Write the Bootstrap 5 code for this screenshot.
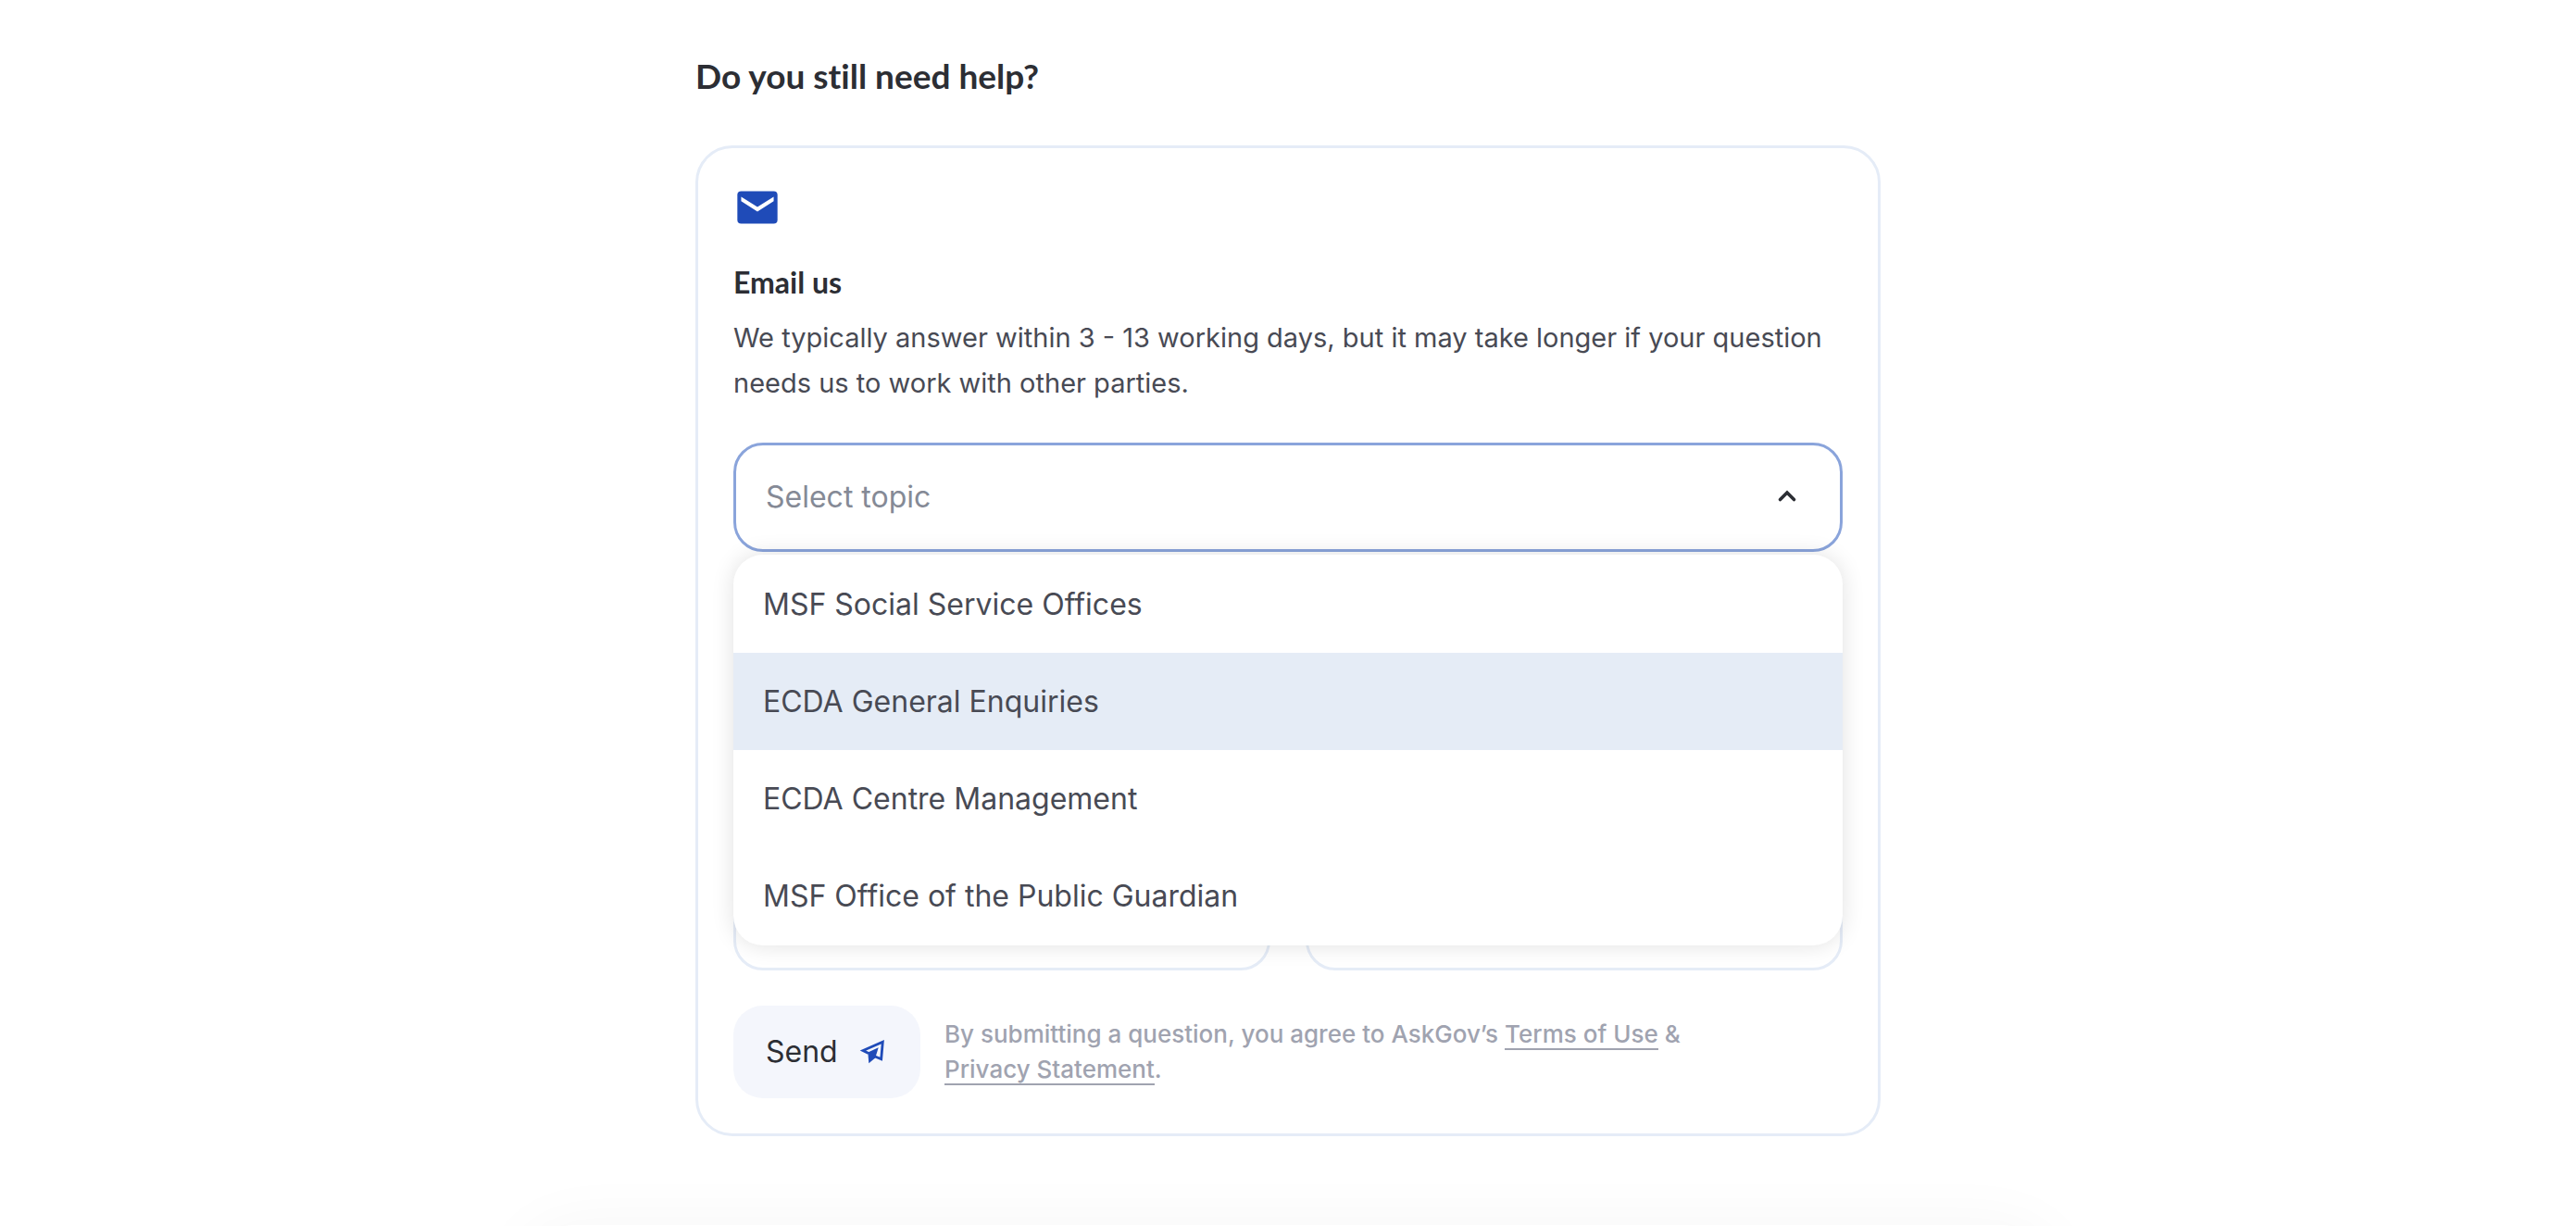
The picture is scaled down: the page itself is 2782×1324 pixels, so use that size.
<!DOCTYPE html>
<html lang="en">
<head>
<meta charset="utf-8">
<meta name="viewport" content="width=device-width, initial-scale=1">
<title>AskGov</title>
<link href="https://cdn.jsdelivr.net/npm/bootstrap@5.3.0/dist/css/bootstrap.min.css" rel="stylesheet">
<style>
  :root {
    --ink: #2c2e34;
    --body-ink: #484a54;
    --muted-ink: #858a96;
    --legal-ink: #a0a3b0;
    --line: #e5ecf7;
    --focus-line: #8aa4db;
    --brand: #1f4bb8;
  }
  body { font-family: Inter, "Liberation Sans", sans-serif; color: var(--body-ink); background: #fff; }
  .page-shell::after {
    content: ""; position: absolute; top: calc(100% - 1px); left: 50%; translate: -50% 0;
    width: 1660px; height: 400px; border-radius: 60px; background: #fff;
    box-shadow: 0 0 70px rgba(0, 0, 0, .04);
  }
  .help-section { max-width: 1280px; padding-top: 58px; padding-bottom: 96px; }
  .help-title, .contact-title {
    font-family: Lato, "Liberation Sans", sans-serif; font-weight: 700; color: var(--ink);
    font-variant-ligatures: none;
  }
  .help-title { font-size: 37px; line-height: 48px; margin-bottom: 51px; }
  .contact-card { border: 3px solid var(--line); border-radius: 40px; padding: 38px; }
  .mail-icon { width: 52px; height: 52px; }
  .contact-title { font-size: 32px; line-height: 40px; margin: 35px 0 15px; }
  .contact-note { font-size: 29px; line-height: 49px; margin-bottom: 40px; }
  .form-stack { gap: 38px; }
  .form-stack .form-control, .form-stack .form-select {
    height: 118px; border: 3px solid var(--line); border-radius: 32px;
    padding: 0 32px; font-size: 32px; box-shadow: none;
  }
  .form-stack textarea.form-control { height: 258px; resize: none; padding: 32px; }
  .form-stack .form-select { color: var(--muted-ink); border-color: var(--focus-line); background-image: none; }
  .chevron { right: 39px; width: 42px; height: 42px; color: var(--ink); pointer-events: none; }
  .topic-menu {
    top: 121px; z-index: 5; padding: 1px 0; border-radius: 32px; overflow: hidden;
    box-shadow: 0 0 24px rgba(0, 0, 0, .12);
  }
  .topic-menu .topic-item {
    border: 0; padding: 0 32px; font-size: 32px; line-height: 105px;
    background: transparent; color: var(--body-ink);
  }
  .topic-menu .topic-item.current { background: #e5ecf6; }
  .send-row { gap: 26px; }
  .send-btn {
    width: 202px; height: 100px; border: 0; border-radius: 32px; background: #f4f6fc;
    color: var(--ink); font-size: 32px; padding: 0 38px 0 35px;
  }
  .send-btn svg { width: 28px; height: 28px; }
  .legal-note { font-size: 26px; line-height: 38px; font-weight: 500; color: var(--legal-ink); }
  .legal-note a { color: inherit; text-decoration: none; border-bottom: 2px solid var(--legal-ink); }
</style>
</head>
<body>
<div class="page-shell position-relative overflow-hidden min-vh-100">
  <main class="help-section mx-auto">
    <h2 class="help-title">Do you still need help?</h2>
    <section class="contact-card">
      <svg class="mail-icon d-block" viewBox="0 0 24 24" aria-hidden="true">
        <rect x="2" y="3.9" width="20" height="16.2" rx="1.9" fill="#1f4bb8"/>
        <path d="M3.9 6.7 12 11.8l8.1-5.1v2.2L12 14.1 3.9 8.9z" fill="#fff"/>
      </svg>
      <h3 class="contact-title">Email us</h3>
      <p class="contact-note">We typically answer within 3 - 13 working days, but it may take longer if your question needs us to work with other parties.</p>
      <form class="form-stack d-flex flex-column">
        <div class="position-relative d-flex align-items-center">
          <select class="form-select" aria-label="Select topic">
            <option selected>Select topic</option>
          </select>
          <svg class="chevron position-absolute" viewBox="0 0 42 42" fill="none" stroke="currentColor" stroke-width="3.6" stroke-linecap="round" aria-hidden="true"><path d="m13.500 23.500 7.500-7.500 7.500 7.500"/></svg>
          <ul class="topic-menu list-unstyled position-absolute start-0 w-100 bg-white mb-0">
            <li><button type="button" class="topic-item d-block w-100 text-start">MSF Social Service Offices</button></li>
            <li><button type="button" class="topic-item current d-block w-100 text-start">ECDA General Enquiries</button></li>
            <li><button type="button" class="topic-item d-block w-100 text-start">ECDA Centre Management</button></li>
            <li><button type="button" class="topic-item d-block w-100 text-start">MSF Office of the Public Guardian</button></li>
          </ul>
        </div>
        <textarea class="form-control" aria-label="Question"></textarea>
        <div class="d-flex form-stack">
          <input type="text" class="form-control" aria-label="Name">
          <input type="email" class="form-control" aria-label="Email">
        </div>
        <div class="send-row d-flex align-items-center">
          <button type="submit" class="send-btn d-flex align-items-center justify-content-between flex-shrink-0">Send
            <svg viewBox="0 0 28 28" aria-hidden="true">
              <path d="M10 15.500 4 12.500 25.300 3.200 23.700 21.700 16.500 18.800" fill="none" stroke="#1f4bb8" stroke-width="2.800"/>
              <path d="M20.700 9.300 9.300 14.500 10.300 26.200 17.200 20.600z" fill="#1f4bb8"/>
            </svg>
          </button>
          <p class="legal-note mb-0">By submitting a question, you agree to AskGov’s <a class="text-nowrap" href="#terms">Terms of Use</a> &amp;<br><a class="text-nowrap" href="#privacy">Privacy Statement</a>.</p>
        </div>
      </form>
    </section>
  </main>
</div>
<script src="https://cdn.jsdelivr.net/npm/bootstrap@5.3.0/dist/js/bootstrap.bundle.min.js"></script>
</body>
</html>
